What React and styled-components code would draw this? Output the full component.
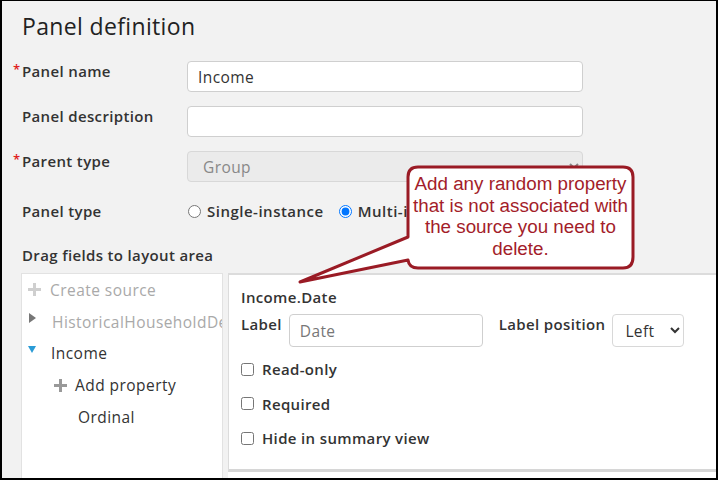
import React from 'react';
import styled, { createGlobalStyle } from 'styled-components';

const GlobalStyle = createGlobalStyle`
  html, body {
    margin: 0;
    padding: 0;
    background: #fff;
  }
  body {
    font-family: "Open Sans", "Noto Sans", sans-serif;
    color: #333;
    letter-spacing: 0.35px;
  }
`;

const Frame = styled.div`
  position: relative;
  box-sizing: border-box;
  width: 718px;
  height: 480px;
  overflow: hidden;
  background: #f2f2f2;
  border: 2px solid #000;
  border-top-width: 1px;
  padding: 0 0 0 20px;
`;

const Title = styled.h1`
  margin: 0;
  padding-top: 10px;
  height: 50px;
  box-sizing: border-box;
  font-size: 23px;
  font-weight: 400;
  letter-spacing: 0.35px;
  color: #222;
  line-height: 30px;
`;

const FormGrid = styled.div`
  display: grid;
  grid-template-columns: 165px 396px;
  row-gap: 14px;
  align-items: start;
  margin-top: 10px;
`;

const FieldLabel = styled.label`
  position: relative;
  font-size: 15px;
  font-weight: 600;
  color: #333;
  line-height: 20px;
  padding-top: ${(p) => (p.$center ? '5px' : '0')};
  ${(p) =>
    p.$required &&
    `
    &::before {
      content: '*';
      position: absolute;
      left: -9px;
      top: -2px;
      color: #e0201c;
      font-size: 13px;
    }
  `}
`;

const TextInput = styled.input`
  box-sizing: border-box;
  width: ${(p) => p.$width || '396px'};
  height: ${(p) => p.$height || '31px'};
  border: 1px solid #cfcfcf;
  border-radius: 4px;
  background: #fff;
  padding: 0 10px;
  font-family: inherit;
  font-size: 15.5px;
  letter-spacing: 0.4px;
  color: #333;
  outline: none;

  &::placeholder {
    color: #777;
  }
`;

const Select = styled.select`
  box-sizing: border-box;
  width: ${(p) => p.$width || '396px'};
  height: ${(p) => p.$height || '31px'};
  border: 1px solid #d8d8d8;
  border-radius: 4px;
  background: ${(p) => (p.disabled ? '#ebebeb' : '#fff')};
  padding: 0 ${(p) => (p.disabled ? '11px' : '8px')};
  font-family: inherit;
  font-size: 15.5px;
  letter-spacing: 0.4px;
  color: ${(p) => (p.disabled ? '#888' : '#333')};
  opacity: 1;
`;

const RadioGroup = styled.div`
  display: flex;
  align-items: center;
  height: 30px;
  gap: 14px;
`;

const Choice = styled.label`
  display: flex;
  align-items: center;
  gap: 6px;
  font-size: 15px;
  font-weight: 600;
  letter-spacing: 0.5px;
  color: #333;
  white-space: nowrap;

  input {
    margin: 0 0 0 1px;
    width: 13px;
    height: 13px;
  }
`;

const SectionHeading = styled.div`
  margin-top: 19px;
  font-size: 15px;
  font-weight: 600;
  line-height: 20px;
  color: #333;
`;

const Workspace = styled.div`
  display: flex;
  gap: 5px;
  margin-top: 8px;
  margin-left: -1px;
  height: 220px;
`;

const Tree = styled.ul`
  box-sizing: border-box;
  width: 202px;
  margin: 0;
  padding: 0;
  list-style: none;
  background: #fff;
  border: 1px solid #e2e2e2;
  border-bottom: none;
  overflow: hidden;
`;

const TreeItem = styled.li`
  display: flex;
  align-items: center;
  height: 31.8px;
  padding-left: ${(p) => p.$indent}px;
  gap: ${(p) => p.$gap ?? 8}px;
  white-space: nowrap;
  font-size: 15.5px;
  letter-spacing: 0.45px;
  color: ${(p) => (p.$muted ? '#a9a9a9' : '#333')};
`;

const Plus = styled.span`
  position: relative;
  width: 13px;
  height: 13px;
  flex: none;

  &::before,
  &::after {
    content: '';
    position: absolute;
    background: ${(p) => p.$color || '#999'};
  }
  &::before {
    left: 0;
    right: 0;
    top: 5px;
    height: 3px;
  }
  &::after {
    top: 0;
    bottom: 0;
    left: 5px;
    width: 3px;
  }
`;

const Caret = styled.span`
  width: 0;
  height: 0;
  flex: none;
  margin-top: -8px;
  ${(p) =>
    p.$open
      ? `
    border-left: 4.5px solid transparent;
    border-right: 4.5px solid transparent;
    border-top: 7px solid #2a9bd6;
  `
      : `
    border-top: 5px solid transparent;
    border-bottom: 5px solid transparent;
    border-left: 7px solid #777;
  `}
`;

const DesignerColumn = styled.div`
  flex: 1;
  background: #fff;
`;

const Designer = styled.div`
  box-sizing: border-box;
  height: 199px;
  background: #fff;
  border: 1px solid #dcdcdc;
  border-top-width: 2px;
  border-bottom: 3px solid #d6d6d6;
  border-right: none;
  padding: 12px 0 0 12px;
`;

const FieldName = styled.div`
  font-size: 15px;
  font-weight: 600;
  line-height: 20px;
  color: #333;
`;

const FieldRow = styled.div`
  display: flex;
  align-items: flex-start;
  margin-top: 7px;
  margin-bottom: 5px;
`;

const InlineLabel = styled.span`
  font-size: 15px;
  font-weight: 600;
  line-height: 20px;
  color: #333;
  white-space: nowrap;
  margin: ${(p) => p.$margin || '0'};
`;

const CheckRow = styled.label`
  display: flex;
  align-items: center;
  height: 34.5px;
  gap: 8px;
  font-size: 15px;
  font-weight: 600;
  color: #333;

  input {
    margin: 0;
    width: 13px;
    height: 13px;
  }
`;

const Callout = styled.div`
  position: absolute;
  left: 296px;
  top: 163px;
  width: 340px;
  height: 122px;

  svg {
    position: absolute;
    inset: 0;
  }
`;

const CalloutText = styled.p`
  position: absolute;
  left: 109px;
  top: 2px;
  width: 227px;
  margin: 0;
  padding-top: 7px;
  text-align: center;
  font-family: "Liberation Sans", Arial, sans-serif;
  font-size: 18.8px;
  letter-spacing: 0;
  line-height: 21.7px;
  color: #a31d2a;
`;

export default function App() {
  return (
    <>
      <GlobalStyle />
      <Frame>
        <Title>Panel definition</Title>

        <FormGrid>
          <FieldLabel $required>Panel name</FieldLabel>
          <TextInput defaultValue="Income" />

          <FieldLabel>Panel description</FieldLabel>
          <TextInput />

          <FieldLabel $required>Parent type</FieldLabel>
          <Select disabled defaultValue="group">
            <option value="group">Group</option>
          </Select>

          <FieldLabel $center>Panel type</FieldLabel>
          <RadioGroup>
            <Choice>
              <input type="radio" name="panelType" />
              Single-instance
            </Choice>
            <Choice>
              <input type="radio" name="panelType" defaultChecked />
              Multi-instance
            </Choice>
          </RadioGroup>
        </FormGrid>

        <SectionHeading>Drag fields to layout area</SectionHeading>

        <Workspace>
          <Tree>
            <TreeItem $indent={6} $gap={9} $muted>
              <Plus $color="#cfcfcf" />
              Create source
            </TreeItem>
            <TreeItem $indent={7} $gap={16} $muted>
              <Caret />
              HistoricalHouseholdDetails
            </TreeItem>
            <TreeItem $indent={6} $gap={15}>
              <Caret $open />
              Income
            </TreeItem>
            <TreeItem $indent={32} $gap={8}>
              <Plus />
              Add property
            </TreeItem>
            <TreeItem $indent={56}>Ordinal</TreeItem>
          </Tree>

          <DesignerColumn>
            <Designer>
              <FieldName>Income.Date</FieldName>
              <FieldRow>
                <InlineLabel $margin="0 7px 0 0">Label</InlineLabel>
                <TextInput $width="194px" $height="33px" placeholder="Date" />
                <InlineLabel $margin="0 7px 0 16px">Label position</InlineLabel>
                <Select $width="72px" $height="33px" defaultValue="left">
                  <option value="left">Left</option>
                  <option value="top">Top</option>
                </Select>
              </FieldRow>
              <CheckRow>
                <input type="checkbox" />
                Read-only
              </CheckRow>
              <CheckRow>
                <input type="checkbox" />
                Required
              </CheckRow>
              <CheckRow>
                <input type="checkbox" />
                Hide in summary view
              </CheckRow>
            </Designer>
          </DesignerColumn>
        </Workspace>

        <Callout>
          <svg width="340" height="122" viewBox="0 0 340 122">
            <path
              d="M120 3 H325 Q335 3 335 13 V93 Q335 104 325 104 H120 Q111 104 110 96 L2 118 L110 73 V13 Q110 3 120 3 Z"
              fill="#fff"
              stroke="#9a1b25"
              strokeWidth="3"
              strokeLinejoin="round"
            />
          </svg>
          <CalloutText>
            Add any random property that is not associated with the source you
            need to delete.
          </CalloutText>
        </Callout>
      </Frame>
    </>
  );
}
